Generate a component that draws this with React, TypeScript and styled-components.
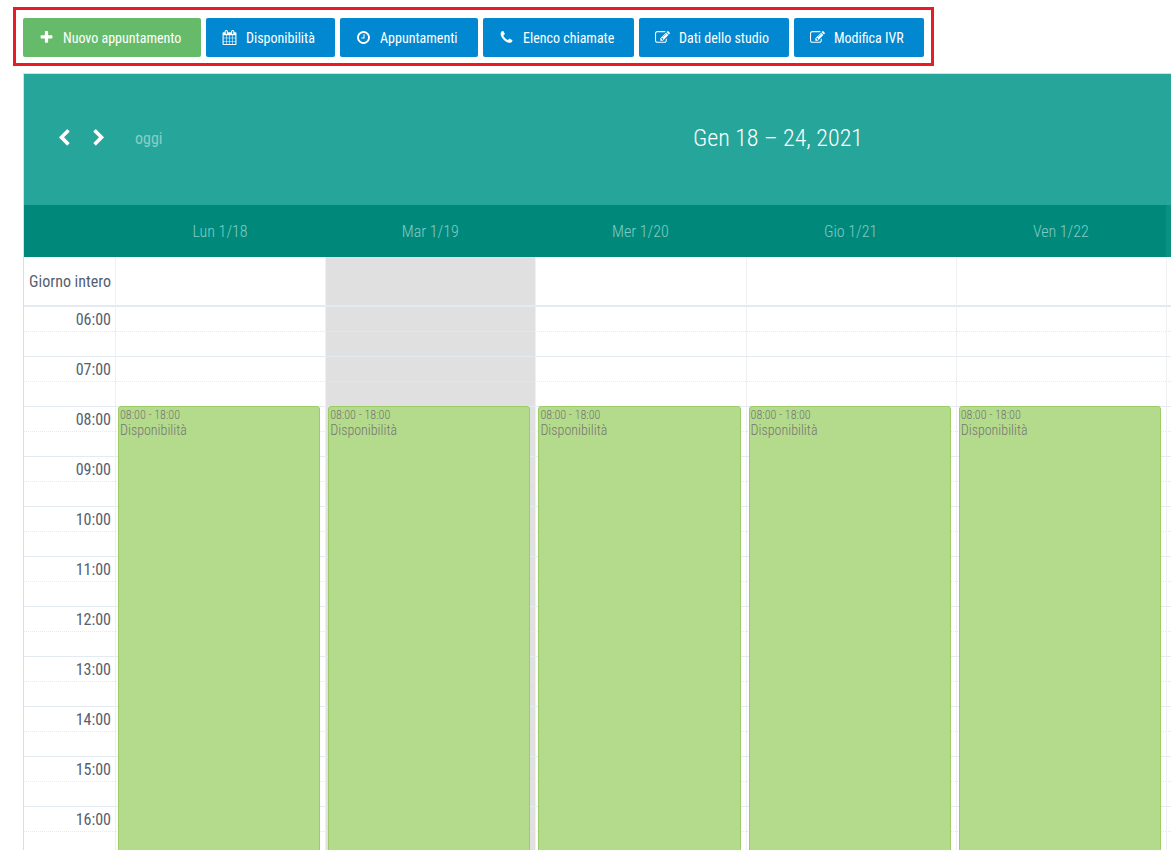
import React from "react";
import styled, { createGlobalStyle, css } from "styled-components";

const GlobalStyle = createGlobalStyle`
  * { box-sizing: border-box; }
  body {
    margin: 0;
    background: #fff;
    color: #55606e;
    font-family: "Roboto Condensed", "Liberation Sans Narrow", Roboto, sans-serif;
    font-size: 16px;
  }
  button { font: inherit; cursor: pointer; }
`;

const Page = styled.main`
  height: 100vh;
  overflow: hidden;
  padding: 7px 0 0 13px;
`;

const ActionBar = styled.nav`
  display: flex;
  gap: 5px;
  width: fit-content;
  padding: 8px 7px 6px;
  border: 3px solid #e81c25;
`;

const ActionButton = styled.button<{ $primary?: boolean; $width: number }>`
  display: flex;
  align-items: center;
  gap: 9px;
  width: ${(p) => p.$width}px;
  height: 39px;
  padding: 1px 0 0 16px;
  border: 0;
  border-radius: 2px;
  background: ${(p) => (p.$primary ? "#66bb6a" : "#0288d1")};
  color: #fff;
  font-size: 14px;
  font-weight: 400;
  white-space: nowrap;

  svg { margin-bottom: 2px; }
`;

const Calendar = styled.section`
  margin: 7px 0 0 10px;
  border-top: 1px solid #ddd;
  border-left: 1px solid #ddd;
`;

const Toolbar = styled.header`
  display: grid;
  grid-template-columns: 361px 1fr;
  align-items: center;
  height: 131px;
  padding-bottom: 3px;
  background: #26a69a;
  color: #fff;
`;

const NavGroup = styled.div`
  display: flex;
  align-items: center;
  padding-left: 31px;
`;

const NavButton = styled.button`
  display: flex;
  align-items: center;
  justify-content: center;
  width: 18px;
  height: 32px;
  margin-right: 17px;
  padding: 0;
  border: 0;
  background: none;
  color: #fff;
`;

const TodayButton = styled.button`
  margin-left: 10px;
  padding: 0;
  border: 0;
  background: none;
  color: #8acdc6;
`;

const Title = styled.h2`
  margin: 0;
  font-size: 24px;
  font-weight: 300;
  line-height: 32px;
  text-align: center;
`;

const Schedule = styled.table`
  width: 100%;
  table-layout: fixed;
  border-collapse: separate;
  border-spacing: 0;

  th, td { padding: 0; }
`;

const AxisCol = styled.col`
  width: 91px;
`;

const EdgeCol = styled.col`
  width: 5px;
`;

const DayHeading = styled.th<{ $edge?: boolean }>`
  height: 52px;
  background: ${(p) => (p.$edge ? "#0b9182" : "#00897b")};
  color: #80cbc4;
  font-weight: 300;
`;

const AxisLabel = styled.th`
  color: #55606e;
  font-weight: 400;
  line-height: 22px;
  text-align: right;

  && { padding: 2px 4px 0 0; }
`;

const AllDayRow = styled.tr`
  height: 50px;

  th, td { border-bottom: 2px solid #e4eaf1; }
`;

const SlotRow = styled.tr<{ $half?: boolean; $first?: boolean }>`
  height: 25px;

  th, td {
    ${(p) =>
      !p.$first &&
      css`
        border-top: 1px ${p.$half ? "dotted" : "solid"} #e4eaf1;
      `}
  }

  ${(p) => p.$first && css`height: 24px;`}
`;

const Cell = styled.td<{ $today?: boolean }>`
  position: relative;
  border-left: 1px solid #eef0f3;
  background: ${(p) => (p.$today ? "#e0e0e0" : "#fff")};
`;

const EventBlock = styled.article`
  position: absolute;
  z-index: 1;
  top: -1px;
  left: 2px;
  right: 5px;
  height: 500px;
  padding: 1px;
  border: 1px solid #9ccc65;
  border-radius: 3px;
  background: #b4da8b;
  color: #757575;
  font-weight: 300;
`;

const EventTime = styled.div`
  font-size: 12px;
  line-height: 14px;
`;

const EventName = styled.div`
  font-size: 14px;
  line-height: 16px;
`;

const icons = {
  plus: "M1600 736v192q0 40-28 68t-68 28h-416v416q0 40-28 68t-68 28h-192q-40 0-68-28t-28-68v-416h-416q-40 0-68-28t-28-68v-192q0-40 28-68t68-28h416v-416q0-40 28-68t68-28h192q40 0 68 28t28 68v416h416q40 0 68 28t28 68z",
  calendar:
    "M192 1664h288v-288h-288v288zm352 0h320v-288h-320v288zm-352-352h288v-320h-288v320zm352 0h320v-320h-320v320zm-352-384h288v-288h-288v288zm736 736h320v-288h-320v288zm-384-736h320v-288h-320v288zm768 736h288v-288h-288v288zm-384-352h320v-320h-320v320zm-352-864v-288q0-13-9.500-22.500t-22.500-9.500h-64q-13 0-22.500 9.500t-9.500 22.500v288q0 13 9.500 22.500t22.500 9.500h64q13 0 22.500-9.500t9.500-22.500zm736 864h288v-320h-288v320zm-384-384h320v-288h-320v288zm384 0h288v-288h-288v288zm32-480v-288q0-13-9.500-22.500t-22.500-9.500h-64q-13 0-22.500 9.500t-9.500 22.500v288q0 13 9.500 22.500t22.500 9.500h64q13 0 22.500-9.500t9.500-22.500zm384-64v1280q0 52-38 90t-90 38h-1408q-52 0-90-38t-38-90v-1280q0-52 38-90t90-38h128v-96q0-66 47-113t113-47h64q66 0 113 47t47 113v96h384v-96q0-66 47-113t113-47h64q66 0 113 47t47 113v96h128q52 0 90 38t38 90z",
  clock:
    "M1024 544v448q0 14-9 23t-23 9h-320q-14 0-23-9t-9-23v-64q0-14 9-23t23-9h224v-352q0-14 9-23t23-9h64q14 0 23 9t9 23zm416 352q0-148-73-273t-198-198-273-73-273 73-198 198-73 273 73 273 198 198 273 73 273-73 198-198 73-273zm224 0q0 209-103 385.500t-279.500 279.500-385.500 103-385.500-103-279.500-279.500-103-385.500 103-385.500 279.500-279.500 385.500-103 385.500 103 279.500 279.500 103 385.500z",
  phone:
    "M1600 1240q0 27-10 70.500t-21 68.500q-21 50-122 106-94 51-186 51-27 0-53-3.500t-57.500-12.500-47-14.500-55.500-20.500-49-18q-98-35-175-83-127-79-264-216t-216-264q-48-77-83-175-3-9-18-49t-20.500-55.500-14.500-47-12.500-57.500-3.500-53q0-92 51-186 56-101 106-122 25-11 68.500-21t70.500-10q14 0 21 3 18 6 53 76 11 19 30 54t35 63.500 31 53.500q3 4 17.500 25t21.500 35.500 7 28.500q0 20-28.500 50t-62 55-62 53-28.500 46q0 9 5 22.500t8.500 20.500 14 24 11.500 19q76 137 174 235t235 174q2 1 19 11.500t24 14 20.500 8.500 22.500 5q18 0 46-28.500t53-62 55-62 50-28.500q14 0 28.500 7t35.500 21.500 25 17.500q25 15 53.500 31t63.500 35 54 30q70 35 76 53 3 7 3 21z",
  edit: "M888 1184l116-116-152-152-116 116v56h96v96h56zm440-720q-16-16-33 1l-350 350q-17 17-1 33t33-1l350-350q17-17 1-33zm80 594v190q0 119-84.500 203.500t-203.500 84.500h-832q-119 0-203.500-84.500t-84.500-203.500v-832q0-119 84.500-203.500t203.500-84.500h832q63 0 117 25 15 7 18 23 3 17-9 29l-49 49q-14 14-32 8-23-6-45-6h-832q-66 0-113 47t-47 113v832q0 66 47 113t113 47h832q66 0 113-47t47-113v-126q0-13 9-22l64-64q15-15 35-7t20 29zm-96-738l288 288-672 672h-288v-288zm444 132l-92 92-288-288 92-92q28-28 68-28t68 28l152 152q28 28 28 68t-28 68z",
  previous:
    "M1427 301l-531 531 531 531q19 19 19 45t-19 45l-166 166q-19 19-45 19t-45-19l-742-742q-19-19-19-45t19-45l742-742q19-19 45-19t45 19l166 166q19 19 19 45t-19 45z",
  next: "M1363 877l-742 742q-19 19-45 19t-45-19l-166-166q-19-19-19-45t19-45l531-531-531-531q-19-19-19-45t19-45l166-166q19-19 45-19t45 19l742 742q19 19 19 45t-19 45z",
};

type IconName = keyof typeof icons;

function Icon({ name, size = 15 }: { name: IconName; size?: number }) {
  return (
    <svg width={size} height={size} viewBox="0 0 1792 1792" fill="currentColor" overflow="visible" aria-hidden="true">
      <path d={icons[name]} />
    </svg>
  );
}

const actions: { label: string; icon: IconName; width: number; primary?: boolean }[] = [
  { label: "Nuovo appuntamento", icon: "plus", width: 178, primary: true },
  { label: "Disponibilità", icon: "calendar", width: 129 },
  { label: "Appuntamenti", icon: "clock", width: 138 },
  { label: "Elenco chiamate", icon: "phone", width: 151 },
  { label: "Dati dello studio", icon: "edit", width: 150 },
  { label: "Modifica IVR", icon: "edit", width: 130 },
];

const days = ["Lun 1/18", "Mar 1/19", "Mer 1/20", "Gio 1/21", "Ven 1/22"];
const TODAY = "Mar 1/19";
const hours = Array.from({ length: 11 }, (_, i) => i + 6);
const OPENING_HOUR = 8;

export default function App() {
  return (
    <>
      <GlobalStyle />
      <Page>
        <ActionBar>
          {actions.map((a) => (
            <ActionButton key={a.label} type="button" $primary={a.primary} $width={a.width}>
              <Icon name={a.icon} />
              {a.label}
            </ActionButton>
          ))}
        </ActionBar>
        <Calendar>
          <Toolbar>
            <NavGroup>
              <NavButton type="button" aria-label="Settimana precedente">
                <Icon name="previous" size={18} />
              </NavButton>
              <NavButton type="button" aria-label="Settimana successiva">
                <Icon name="next" size={18} />
              </NavButton>
              <TodayButton type="button">oggi</TodayButton>
            </NavGroup>
            <Title>Gen 18 – 24, 2021</Title>
          </Toolbar>
          <Schedule>
            <colgroup>
              <AxisCol />
              {days.map((d) => (
                <col key={d} />
              ))}
              <EdgeCol />
            </colgroup>
            <thead>
              <tr>
                <DayHeading />
                {days.map((d) => (
                  <DayHeading key={d} scope="col">
                    {d}
                  </DayHeading>
                ))}
                <DayHeading $edge />
              </tr>
            </thead>
            <tbody>
              <AllDayRow>
                <AxisLabel scope="row">Giorno intero</AxisLabel>
                {days.map((d) => (
                  <Cell key={d} $today={d === TODAY} />
                ))}
                <Cell />
              </AllDayRow>
              {hours.map((hour, i) => (
                <React.Fragment key={hour}>
                  <SlotRow $first={i === 0}>
                    <AxisLabel scope="row">{String(hour).padStart(2, "0")}:00</AxisLabel>
                    {days.map((d) => (
                      <Cell key={d} $today={d === TODAY}>
                        {hour === OPENING_HOUR && (
                          <EventBlock>
                            <EventTime>08:00 - 18:00</EventTime>
                            <EventName>Disponibilità</EventName>
                          </EventBlock>
                        )}
                      </Cell>
                    ))}
                    <Cell />
                  </SlotRow>
                  <SlotRow $half>
                    <AxisLabel as="td" />
                    {days.map((d) => (
                      <Cell key={d} $today={d === TODAY} />
                    ))}
                    <Cell />
                  </SlotRow>
                </React.Fragment>
              ))}
            </tbody>
          </Schedule>
        </Calendar>
      </Page>
    </>
  );
}
